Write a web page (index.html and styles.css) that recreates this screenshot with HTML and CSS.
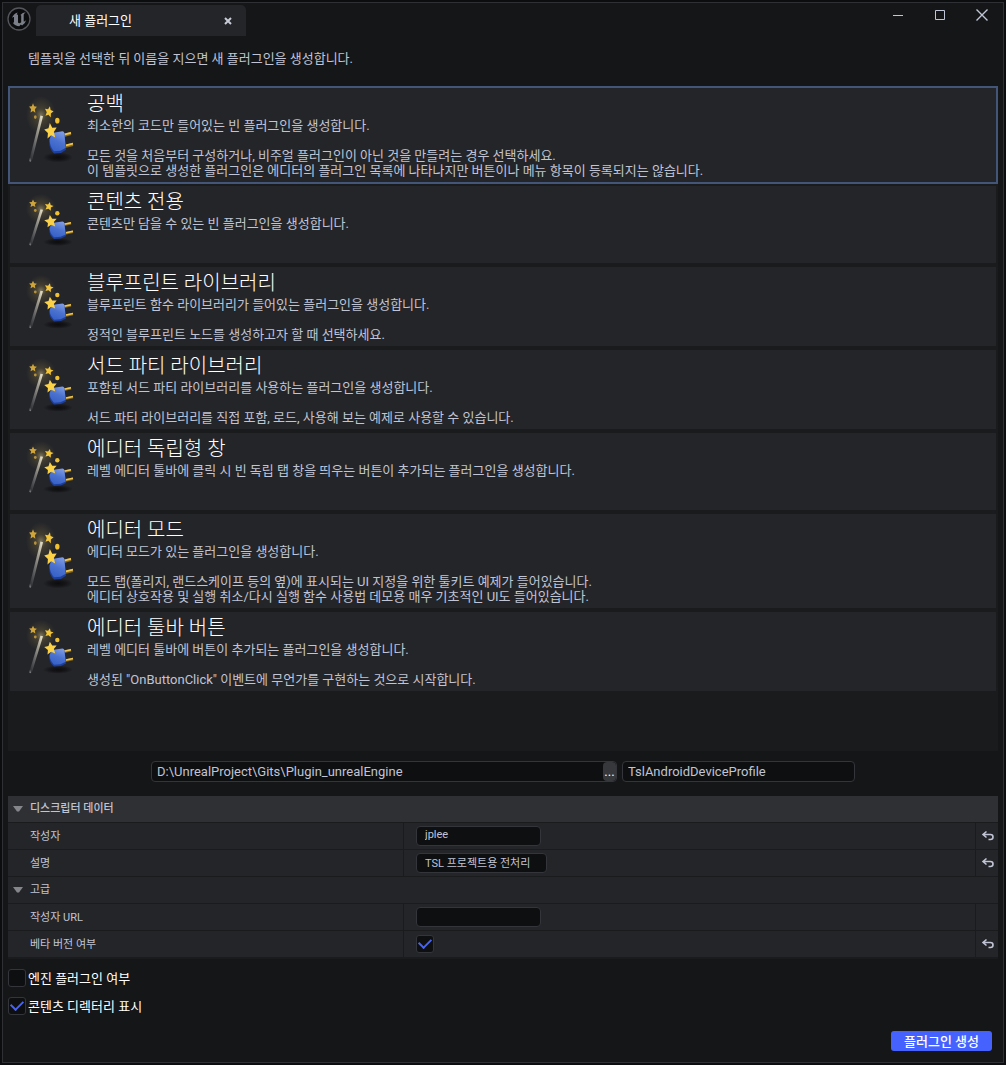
FILE: index.html
```html
<!DOCTYPE html>
<html lang="ko">
<head>
  <meta charset="UTF-8">
  <title>새 플러그인</title>
  <meta name="viewport" content="width=device-width, initial-scale=1.0">
  <link rel="stylesheet" href="styles.css">
</head>
<body>
  <!-- Shared icons -->
  <svg class="icon-defs" aria-hidden="true">
    <defs>
      <radialGradient id="glow">
        <stop offset="0" stop-color="#d8c890" stop-opacity="0.5"/>
        <stop offset="0.35" stop-color="#a08a48" stop-opacity="0.24"/>
        <stop offset="1" stop-color="#a08a48" stop-opacity="0"/>
      </radialGradient>
      <radialGradient id="shadow">
        <stop offset="0" stop-color="#0a0a0c" stop-opacity="0.9"/>
        <stop offset="0.5" stop-color="#0a0a0c" stop-opacity="0.6"/>
        <stop offset="1" stop-color="#0a0a0c" stop-opacity="0"/>
      </radialGradient>
      <linearGradient id="stick" x1="1" y1="0" x2="0" y2="1">
        <stop offset="0" stop-color="#efe9cf"/>
        <stop offset="0.3" stop-color="#a5a294"/>
        <stop offset="0.7" stop-color="#55565a"/>
        <stop offset="1" stop-color="#26272a"/>
      </linearGradient>
      <linearGradient id="plug" x1="0.7" y1="0" x2="0.3" y2="1">
        <stop offset="0" stop-color="#7f9ce4"/>
        <stop offset="0.5" stop-color="#4b72cf"/>
        <stop offset="1" stop-color="#3560c8"/>
      </linearGradient>
      <path id="star" d="M0-5 1.5-1.8 5-1.4 2.4 1 3 4.6 0 2.8-3.2 4.4-2.4 1-5-1.6-1.5-1.9Z"/>
      <g id="wand">
        <circle cx="23" cy="15" r="15" fill="url(#glow)"/>
        <ellipse cx="40" cy="48" rx="15" ry="4" fill="url(#shadow)"/>
        <path d="M22.4 15.2 25 15.8 13.8 51 11.200 50.4Z" fill="url(#stick)"/>
        <path d="M12 48 13 51.500 11.400 51Z" fill="#8b8b8e"/>
        <path d="M46 30.800 53 29.200M48 39.200 55 37.800" stroke="#8a6a1c" stroke-width="2.600"/>
        <path d="M46 30.300 53 28.800M48 38.700 55 37.300" stroke="#eec553" stroke-width="1.400"/>
        <path d="M33 29.500 44.500 28Q46 28 46.500 30L48 42 43 44.500 36 45Q31 41 31.200 35.500Z" fill="#1e3f9a"/>
        <path d="M34 29 44.500 27.500Q46 27.500 46.300 29L47.800 40.500 42.500 42.800 36 43.300Q31.500 39 31.600 34Z" fill="url(#plug)"/>
        <use href="#star" transform="translate(15 9.500) scale(0.780)" fill="#cfa53a"/>
        <use href="#star" transform="translate(31 12.300) rotate(12) scale(0.880)" fill="#f2c53a"/>
        <use href="#star" transform="translate(32.700 27.300) rotate(-8) scale(1.250)" fill="#fbd148"/>
        <circle cx="17.300" cy="16.500" r="1.400" fill="#b8923a"/>
        <circle cx="39.300" cy="19.300" r="2.200" fill="#efbf34"/>
      </g>
      <g id="reset" fill="none" stroke="#c0c4d4" stroke-width="1.600">
        <path d="M6.500 1.500 3 4.500 6.500 7.500M3 4.500H10.500A2.300 2.300 0 0 1 10.500 9.500H8.500"/>
      </g>
    </defs>
  </svg>

  <main class="window">
    <header class="titlebar">
      <svg class="logo" viewBox="0 0 24 24" aria-hidden="true">
        <circle cx="12" cy="12" r="11" fill="#0b0c0e" stroke="#56575c" stroke-width="1.300"/>
        <path d="M10.700 5.500Q6.500 6.800 4.800 11.200 6.200 9.500 7 10V15Q7 16 5.800 15.700 8 19 12.300 19.200L13.800 17.600 15.100 18.500Q18.300 16.500 19.200 12.900 17.700 14.500 16.700 14.500V7.500Q17.500 6 18.800 5.300 15.600 5.600 13.400 7.900L14.200 8.600V15.300Q12.300 17 11 15.600V7.400Q10.300 7.600 9.800 8 9.700 6.700 10.700 5.500Z" fill="#7b7f89"/>
      </svg>
      <div class="tab">
        <h1 class="tab-title">새 플러그인</h1>
        <button class="tab-close" aria-label="탭 닫기">
          <svg width="8" height="8" viewBox="0 0 8 8"><path d="M1 1 7 7M7 1 1 7" stroke="#c8cbd6" stroke-width="2"/></svg>
        </button>
      </div>
      <div class="window-buttons">
        <button aria-label="최소화"><svg width="12" height="12" viewBox="0 0 12 12"><path d="M1 6.500H11" stroke="#c0c6d8"/></svg></button>
        <button aria-label="최대화"><svg width="12" height="12" viewBox="0 0 12 12"><path d="M1.500 1.500H10.500V10.500H1.500Z" fill="none" stroke="#c0c6d8"/></svg></button>
        <button aria-label="닫기"><svg width="12" height="12" viewBox="0 0 12 12"><path d="M.5 .5 11.500 11.500M11.500 .5 .5 11.500" stroke="#c0c6d8" stroke-width="1.400"/></svg></button>
      </div>
    </header>

    <p class="intro">템플릿을 선택한 뒤 이름을 지으면 새 플러그인을 생성합니다.</p>

    <!-- Template list -->
    <div class="templates">
      <button class="template selected" aria-pressed="true">
        <svg class="template-icon" viewBox="0 0 64 61" preserveAspectRatio="none" aria-hidden="true"><use href="#wand"/></svg>
        <span class="template-text">
          <span class="template-name">공백</span>
          <span class="template-desc">최소한의 코드만 들어있는 빈 플러그인을 생성합니다.<br><br>모든 것을 처음부터 구성하거나, 비주얼 플러그인이 아닌 것을 만들려는 경우 선택하세요.<br>이 템플릿으로 생성한 플러그인은 에디터의 플러그인 목록에 나타나지만 버튼이나 메뉴 항목이 등록되지는 않습니다.</span>
        </span>
      </button>
      <button class="template" aria-pressed="false">
        <svg class="template-icon" viewBox="0 0 64 61" preserveAspectRatio="none" aria-hidden="true"><use href="#wand"/></svg>
        <span class="template-text">
          <span class="template-name">콘텐츠 전용</span>
          <span class="template-desc">콘텐츠만 담을 수 있는 빈 플러그인을 생성합니다.</span>
        </span>
      </button>
      <button class="template" aria-pressed="false">
        <svg class="template-icon" viewBox="0 0 64 61" preserveAspectRatio="none" aria-hidden="true"><use href="#wand"/></svg>
        <span class="template-text">
          <span class="template-name">블루프린트 라이브러리</span>
          <span class="template-desc">블루프린트 함수 라이브러리가 들어있는 플러그인을 생성합니다.<br><br>정적인 블루프린트 노드를 생성하고자 할 때 선택하세요.</span>
        </span>
      </button>
      <button class="template" aria-pressed="false">
        <svg class="template-icon" viewBox="0 0 64 61" preserveAspectRatio="none" aria-hidden="true"><use href="#wand"/></svg>
        <span class="template-text">
          <span class="template-name">서드 파티 라이브러리</span>
          <span class="template-desc">포함된 서드 파티 라이브러리를 사용하는 플러그인을 생성합니다.<br><br>서드 파티 라이브러리를 직접 포함, 로드, 사용해 보는 예제로 사용할 수 있습니다.</span>
        </span>
      </button>
      <button class="template" aria-pressed="false">
        <svg class="template-icon" viewBox="0 0 64 61" preserveAspectRatio="none" aria-hidden="true"><use href="#wand"/></svg>
        <span class="template-text">
          <span class="template-name">에디터 독립형 창</span>
          <span class="template-desc">레벨 에디터 툴바에 클릭 시 빈 독립 탭 창을 띄우는 버튼이 추가되는 플러그인을 생성합니다.</span>
        </span>
      </button>
      <button class="template" aria-pressed="false">
        <svg class="template-icon" viewBox="0 0 64 61" preserveAspectRatio="none" aria-hidden="true"><use href="#wand"/></svg>
        <span class="template-text">
          <span class="template-name">에디터 모드</span>
          <span class="template-desc">에디터 모드가 있는 플러그인을 생성합니다.<br><br>모드 탭(폴리지, 랜드스케이프 등의 옆)에 표시되는 UI 지정을 위한 툴키트 예제가 들어있습니다.<br>에디터 상호작용 및 실행 취소/다시 실행 함수 사용법 데모용 매우 기초적인 UI도 들어있습니다.</span>
        </span>
      </button>
      <button class="template" aria-pressed="false">
        <svg class="template-icon" viewBox="0 0 64 61" preserveAspectRatio="none" aria-hidden="true"><use href="#wand"/></svg>
        <span class="template-text">
          <span class="template-name">에디터 툴바 버튼</span>
          <span class="template-desc">레벨 에디터 툴바에 버튼이 추가되는 플러그인을 생성합니다.<br><br>생성된 "OnButtonClick" 이벤트에 무언가를 구현하는 것으로 시작합니다.</span>
        </span>
      </button>
    </div>

    <!-- Folder and plugin name -->
    <div class="location">
      <div class="path-box">
        <input type="text" class="path-input" aria-label="플러그인 경로" value="D:\UnrealProject\Gits\Plugin_unrealEngine">
        <button class="browse-btn" aria-label="폴더 찾아보기">...</button>
      </div>
      <input type="text" class="name-input" aria-label="플러그인 이름" value="TslAndroidDeviceProfile">
    </div>

    <!-- Descriptor data -->
    <section class="details">
      <button class="group group-main" aria-expanded="true"><svg class="arrow" viewBox="0 0 10 6" aria-hidden="true"><path d="M0 0H10L6 5.500H4Z"/></svg>디스크립터 데이터</button>
      <div class="prop">
        <label class="prop-name" for="author">작성자</label>
        <div class="prop-value"><input type="text" id="author" class="prop-input" value="jplee"></div>
        <div class="prop-reset"><button aria-label="작성자 초기화"><svg width="14" height="12" viewBox="0 0 14 12"><use href="#reset"/></svg></button></div>
      </div>
      <div class="prop">
        <label class="prop-name" for="description">설명</label>
        <div class="prop-value"><input type="text" id="description" class="prop-input prop-input-wide" value="TSL 프로젝트용 전처리"></div>
        <div class="prop-reset"><button aria-label="설명 초기화"><svg width="14" height="12" viewBox="0 0 14 12"><use href="#reset"/></svg></button></div>
      </div>
      <button class="group" aria-expanded="true"><svg class="arrow" viewBox="0 0 10 6" aria-hidden="true"><path d="M0 0H10L6 5.500H4Z"/></svg>고급</button>
      <div class="prop">
        <label class="prop-name" for="author-url">작성자 URL</label>
        <div class="prop-value"><input type="text" id="author-url" class="prop-input"></div>
        <div class="prop-reset"></div>
      </div>
      <div class="prop">
        <label class="prop-name" for="beta">베타 버전 여부</label>
        <div class="prop-value"><input type="checkbox" id="beta" class="check" checked></div>
        <div class="prop-reset"><button aria-label="베타 버전 여부 초기화"><svg width="14" height="12" viewBox="0 0 14 12"><use href="#reset"/></svg></button></div>
      </div>
    </section>

    <div class="options">
      <label class="option"><input type="checkbox" class="check">엔진 플러그인 여부</label>
      <label class="option"><input type="checkbox" class="check" checked>콘텐츠 디렉터리 표시</label>
    </div>

    <footer class="actions">
      <button class="create-btn">플러그인 생성</button>
    </footer>
  </main>
</body>
</html>
```

FILE: styles.css
```css
* {
  box-sizing: border-box;
}

body {
  margin: 0;
  padding: 2px;
  min-height: 100vh;
  display: flex;
  background: #0c0d0f;
  color: #c0c4d4;
  font-family: Roboto, 'Noto Sans CJK KR', sans-serif;
  font-size: 13px;
  line-height: 15px;
}

button,
input {
  margin: 0;
  font: inherit;
  color: inherit;
}

button {
  padding: 0;
  border: none;
  background: none;
  cursor: pointer;
}

button svg {
  display: block;
}

.icon-defs {
  position: absolute;
  width: 0;
  height: 0;
}

.window {
  flex: 1;
  min-width: 0;
  display: flex;
  flex-direction: column;
  padding: 0 5px 11px;
  border: 1px solid #2f3034;
  background: #151618;
}

/* Title bar */
.titlebar {
  display: flex;
  align-items: flex-start;
  padding-top: 2px;
}

.logo {
  width: 24px;
  height: 24px;
  margin: 2px 5px 0 -1px;
}

.tab {
  display: flex;
  align-items: center;
  justify-content: space-between;
  width: 210px;
  height: 31px;
  padding: 0 14px 0 33px;
  border-radius: 5px 5px 0 0;
  background: #242529;
}

.tab-title {
  margin: 0;
  font-size: 13px;
  font-weight: 400;
  color: #fff;
}

.window-buttons {
  display: flex;
  gap: 30px;
  margin-left: auto;
  padding: 4px 10px 0 0;
}

.intro {
  margin: 0;
  padding: 15px 20px 20px;
}

/* Template list */
.templates {
  flex: 1;
  background: #1a1b1d;
}

.template {
  display: flex;
  align-items: stretch;
  gap: 5px;
  width: 100%;
  padding: 0 8px;
  border: 2px solid #1a1b1d;
  background: #242529;
  text-align: left;
}

.template.selected {
  border-color: #435679;
}

.template-icon {
  flex: none;
  width: 64px;
  min-height: 61px;
  margin: 8px 0;
}

.template-text {
  padding-bottom: 4px;
}

.template-name {
  display: block;
  padding-top: 2px;
  color: #fff;
  font-size: 20px;
  font-weight: 300;
  line-height: 28px;
}

.template-desc {
  display: block;
}

/* Path and name */
.location {
  display: flex;
  justify-content: center;
  gap: 5px;
  padding: 10px 0 14px;
}

.path-box,
.name-input,
.prop-input {
  border: 1px solid #34353a;
  border-radius: 4px;
  background: #0e0f11;
}

.path-box {
  display: flex;
  width: 466px;
  height: 21px;
}

.path-input {
  flex: 1;
  min-width: 0;
  padding: 0 5px;
  border: none;
  background: none;
}

.browse-btn {
  width: 13px;
  border-radius: 4px;
  background: #37383c;
  color: #fff;
}

.name-input {
  width: 233px;
  height: 21px;
  padding: 0 5px;
}

/* Details */
.details {
  border-bottom: 1px solid #1a1b1d;
  background: #242529;
  font-size: 11px;
}

.group {
  display: flex;
  align-items: center;
  gap: 7px;
  width: 100%;
  height: 27px;
  padding: 0 5px 1px;
  border-bottom: 1px solid #1a1b1d;
}

.group-main {
  background: #2f3034;
  font-weight: 500;
}

.arrow {
  width: 10px;
  height: 6px;
  fill: #85868c;
}

.prop {
  display: grid;
  grid-template-columns: 40% 1fr 23px;
  height: 27px;
  border-bottom: 1px solid #1a1b1d;
}

.prop-name {
  padding: 6px 22px 5px;
  border-right: 1px solid #1a1b1d;
}

.prop-value,
.prop-reset {
  display: flex;
  align-items: center;
}

.prop-value {
  padding-left: 12px;
}

.prop-reset {
  justify-content: center;
  border-left: 1px solid #1a1b1d;
}

.prop-input {
  width: 125px;
  height: 20px;
  padding: 0 8px 3px;
}

.prop-input-wide {
  width: 131px;
}

.check {
  appearance: none;
  display: grid;
  place-items: center;
  width: 18px;
  height: 18px;
  border: 1px solid #34353a;
  border-radius: 3px;
  background: #0e0f11;
}

.check:checked::after {
  content: '';
  width: 10px;
  height: 6px;
  margin-bottom: 4px;
  border: solid #4562ff;
  border-width: 0 0 2px 2px;
  transform: rotate(-45deg);
}

/* Options below the details */
.options {
  display: flex;
  flex-direction: column;
  align-items: flex-start;
  gap: 10px;
  padding: 10px 0 16px;
}

.option {
  display: flex;
  align-items: center;
  gap: 2px;
  color: #fff;
}

.actions {
  display: flex;
  justify-content: flex-end;
  padding-right: 6px;
}

.create-btn {
  height: 20px;
  padding: 0 13px;
  border-radius: 3px;
  background: #4562ff;
  color: #fff;
  font-weight: 500;
}
```
